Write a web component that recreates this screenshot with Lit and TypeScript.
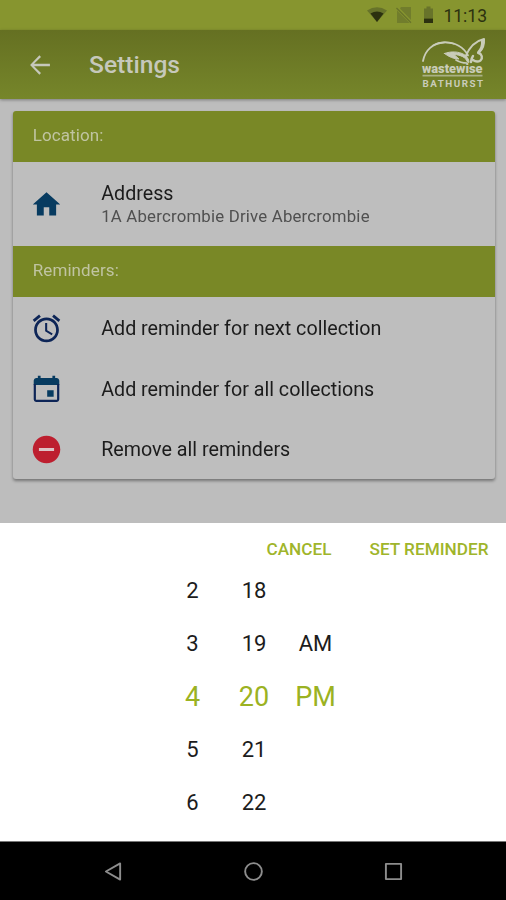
import { LitElement, html, css, svg } from "lit";
import { customElement } from "lit/decorators.js";
import { classMap } from "lit/directives/class-map.js";

const icons = {
  home: svg`<path d="M10 20v-6h4v6h5v-8h3L12 3 2 12h3v8z"/>`,
  alarm: svg`<path d="M22 5.720l-4.600-3.860-1.290 1.530 4.600 3.860L22 5.720zM7.880 3.390L6.600 1.860 2 5.710l1.290 1.530 4.590-3.850zM12.500 8H11v6l4.750 2.850.750-1.230-4-2.370V8zM12 4c-4.970 0-9 4.030-9 9s4.020 9 9 9c4.970 0 9-4.030 9-9s-4.030-9-9-9zm0 16c-3.870 0-7-3.130-7-7s3.130-7 7-7 7 3.130 7 7-3.130 7-7 7z"/>`,
  event: svg`<path class="top" d="M18.300 3.700v-1.700h-2v1.700H7.700V2h-2v1.700h-1c-1.100 0-2 .9-2 2V8.800h18.600V5.700c0-1.100-.9-2-2-2zM17.200 12.600h-4.700v4.600h4.700z"/><path d="M2.700 8V19c0 1.100.9 2 2 2h14.600c1.100 0 2-.9 2-2V8h-1.600v11.400H4.300V8z"/>`,
  remove: svg`<path d="M12 2C6.480 2 2 6.480 2 12s4.480 10 10 10 10-4.480 10-10S17.520 2 12 2z"/><path class="bar" d="M6.500 10.900h11V13h-11z"/>`,
};

const reminders = [
  { icon: icons.alarm, label: "Add reminder for next collection", red: false },
  { icon: icons.event, label: "Add reminder for all collections", red: false },
  { icon: icons.remove, label: "Remove all reminders", red: true },
];

const wheels = [
  { cls: "hour", values: ["2", "3", "4", "5", "6"] },
  { cls: "minute", values: ["18", "19", "20", "21", "22"] },
  { cls: "period", values: ["", "AM", "PM", "", ""] },
];

@customElement("app-root")
export class AppRoot extends LitElement {
  static styles = css`
    :host {
      display: flex;
      flex-direction: column;
      width: 506px;
      height: 900px;
      overflow: hidden;
      background: #bdbdbd;
      font-family: Roboto, "Liberation Sans", sans-serif;
      color: #1c1c1c;
    }
    * { box-sizing: border-box; }
    svg { display: block; flex: none; }
    .status {
      height: 30px;
      flex: none;
      background: #87952f;
      display: flex;
      align-items: center;
      justify-content: flex-end;
      padding: 2px 19px 0 0;
      color: #2c310f;
      font-size: 17.500px;
    }
    .status svg { margin: -2px 6px 0 0; }
    .bar-top {
      height: 69px;
      flex: none;
      background: linear-gradient(#657022, #76862a);
      box-shadow: 0 1px 3px rgba(0, 0, 0, 0.35);
      display: flex;
      align-items: center;
      padding: 0 18px 0 23px;
      color: #c6c8bb;
    }
    .bar-top h1 {
      margin: 0 auto 0 32px;
      font-size: 24.600px;
      font-weight: 500;
      line-height: 30px;
    }
    .logo { margin-top: -4px; }
    .card {
      margin: 12px 11px 0 12.700px;
      height: 368px;
      flex: none;
      border-radius: 3px;
      overflow: hidden;
      background: #bebebe;
    }
    .shade { filter: drop-shadow(0 2px 1.500px rgba(0, 0, 0, 0.38)); }
    .section {
      height: 51px;
      background: #798826;
      color: #c0c4a2;
      display: flex;
      align-items: center;
      padding: 0 20px 3px;
      font-size: 17px;
      letter-spacing: 0.1px;
    }
    .row {
      display: flex;
      align-items: center;
      padding-left: 17.500px;
      height: 60.300px;
      font-size: 19.700px;
    }
    .row svg { fill: #0d2557; margin-right: 38px; }
    .row.address { height: 83.500px; padding-top: 0.500px; }
    .row.address svg, .row .top { fill: #073b60; }
    .row.red svg { fill: #bd1f2f; }
    .row .bar { fill: #dcc4c6; }
    .list { padding-top: 2.200px; }
    .sub { font-size: 16.800px; letter-spacing: 0.2px; line-height: 21px; color: #505050; }
    .name { line-height: 25px; }
    .sheet {
      margin-top: auto;
      height: 319.500px;
      flex: none;
      background: #fff;
      border-bottom: 1px solid #777;
    }
    .actions {
      display: flex;
      justify-content: flex-end;
      gap: 38px;
      padding: 16px 17.500px 0 0;
      height: 41px;
      line-height: 21px;
      font-size: 17.200px;
      font-weight: 500;
      color: #9fb52b;
    }
    .wheels { display: flex; padding-left: 167px; }
    .wheel { display: flex; flex-direction: column; text-align: center; }
    .hour { width: 51px; }
    .minute { width: 72px; }
    .period { width: 51px; }
    .value { height: 53px; line-height: 53px; font-size: 22px; white-space: nowrap; }
    .value.on { font-size: 27px; line-height: 54px; color: #9bb222; }
    .nav {
      height: 58px;
      flex: none;
      background: #000;
      display: grid;
      grid-template-columns: 140px 140px 140px;
      justify-content: center;
      align-items: center;
      justify-items: center;
      padding-left: 1px;
    }
    .nav svg { fill: none; stroke: #8d8d8d; stroke-width: 2; stroke-linejoin: round; }
  `;

  private icon(body: unknown) {
    return html`<svg width="33" height="33" viewBox="0 0 24 24">${body}</svg>`;
  }

  render() {
    return html`
      <div class="status">
        <svg width="70" height="20" viewBox="0 0 70 20">
          <path fill="#67732a" d="M0 5.500Q10-1 20 5.500L10 17z" />
          <path fill="#2c310f" d="M3.500 8.600Q10 4.500 16.500 8.600L10 17z" />
          <path fill="#717d2c" d="M34 2H44V15L33 3.500zM30 5.500L42.500 18H30z" />
          <path fill="none" stroke="#68732a" stroke-width="1.300" d="M29.500 3L44 17.800" />
          <path fill="#68732a" d="M57 3.500h2.500V1.500h4v2H66v10H57z" />
          <path fill="#2c310f" d="M57 13.500h9V18h-9z" />
        </svg>
        <span>11:13</span>
      </div>
      <div class="bar-top">
        <svg width="34" height="34" viewBox="0 0 24 24" fill="#c6c8bb">
          <path d="M19 11.200H7.800l4.900-4.900L11.600 5.200 5 12l6.600 6.800 1.100-1.100-4.900-4.900H19z" />
        </svg>
        <h1>Settings</h1>
        <svg class="logo" width="68" height="54" viewBox="0 0 68 54" fill="none" stroke="#c9ccb9" stroke-linecap="round" stroke-linejoin="round">
          <path stroke-width="1.800" d="M3 25C5 14 13 7 24 6.500c11-.5 20 5 24 13" />
          <path stroke-width="1.300" d="M13 9.500C19 6 27 5.500 34 8" />
          <path fill="#c9ccb9" stroke-width="1" d="M24.500 17.500C31 15 39 15.500 44 18.500c3 2 5 4.500 5 8l-2-1c-1-4-6-6.500-13-7l5 4.500c-5 0-10-2-14.500-5.500z" />
          <path stroke-width="1.700" d="M36 24c3 2 6 3 11 3" />
          <path stroke-width="2" d="M45.500 20.500C49 12 55 5 64 3c.5 6-1 10-5 13.500" />
          <path stroke-width="3" d="M62.500 5C63 10 61.500 13 58.500 16.500" />
          <path stroke-width="2.400" d="M58.500 17c3.500 1 4.500 5 2 7.500-2.500 1.500-5.500 1-7.500-.500M51 26c0-3 .5-4 2-6" />
          <g stroke="none" fill="#c9ccb9" font-family="Roboto, sans-serif">
            <text x="2" y="37" font-size="12" font-weight="900" textLength="60.500" lengthAdjust="spacingAndGlyphs">wastewise</text>
            <path d="M2.500 38.700h60v1.900H2.500z" opacity=".65" />
            <text x="2.500" y="51" font-size="9.800" font-weight="700" textLength="60.500">BATHURST</text>
          </g>
        </svg>
      </div>
      <div class="shade">
        <div class="card">
          <div class="section">Location:</div>
          <div class="row address">
            ${this.icon(icons.home)}
            <div>
              <div class="name">Address</div>
              <div class="sub">1A Abercrombie Drive Abercrombie</div>
            </div>
          </div>
          <div class="section">Reminders:</div>
          <div class="list">
            ${reminders.map(
              (r) => html`<div class=${classMap({ row: true, red: r.red })}>${this.icon(r.icon)}<span>${r.label}</span></div>`
            )}
          </div>
        </div>
      </div>
      <div class="sheet">
        <div class="actions"><span>CANCEL</span><span>SET REMINDER</span></div>
        <div class="wheels">
          ${wheels.map(
            (w) => html`<div class="wheel ${w.cls}">
              ${w.values.map((v, i) => html`<div class=${classMap({ value: true, on: i === 2 })}>${v}</div>`)}
            </div>`
          )}
        </div>
      </div>
      <div class="nav">
        <svg width="19" height="19" viewBox="0 0 20 20"><path d="M17 1.500v17L2 10z" /></svg>
        <svg width="19" height="19" viewBox="0 0 20 20"><circle cx="10" cy="10" r="8.800" /></svg>
        <svg width="19" height="19" viewBox="0 0 20 20"><path d="M2 2h16v16H2z" /></svg>
      </div>
    `;
  }
}
